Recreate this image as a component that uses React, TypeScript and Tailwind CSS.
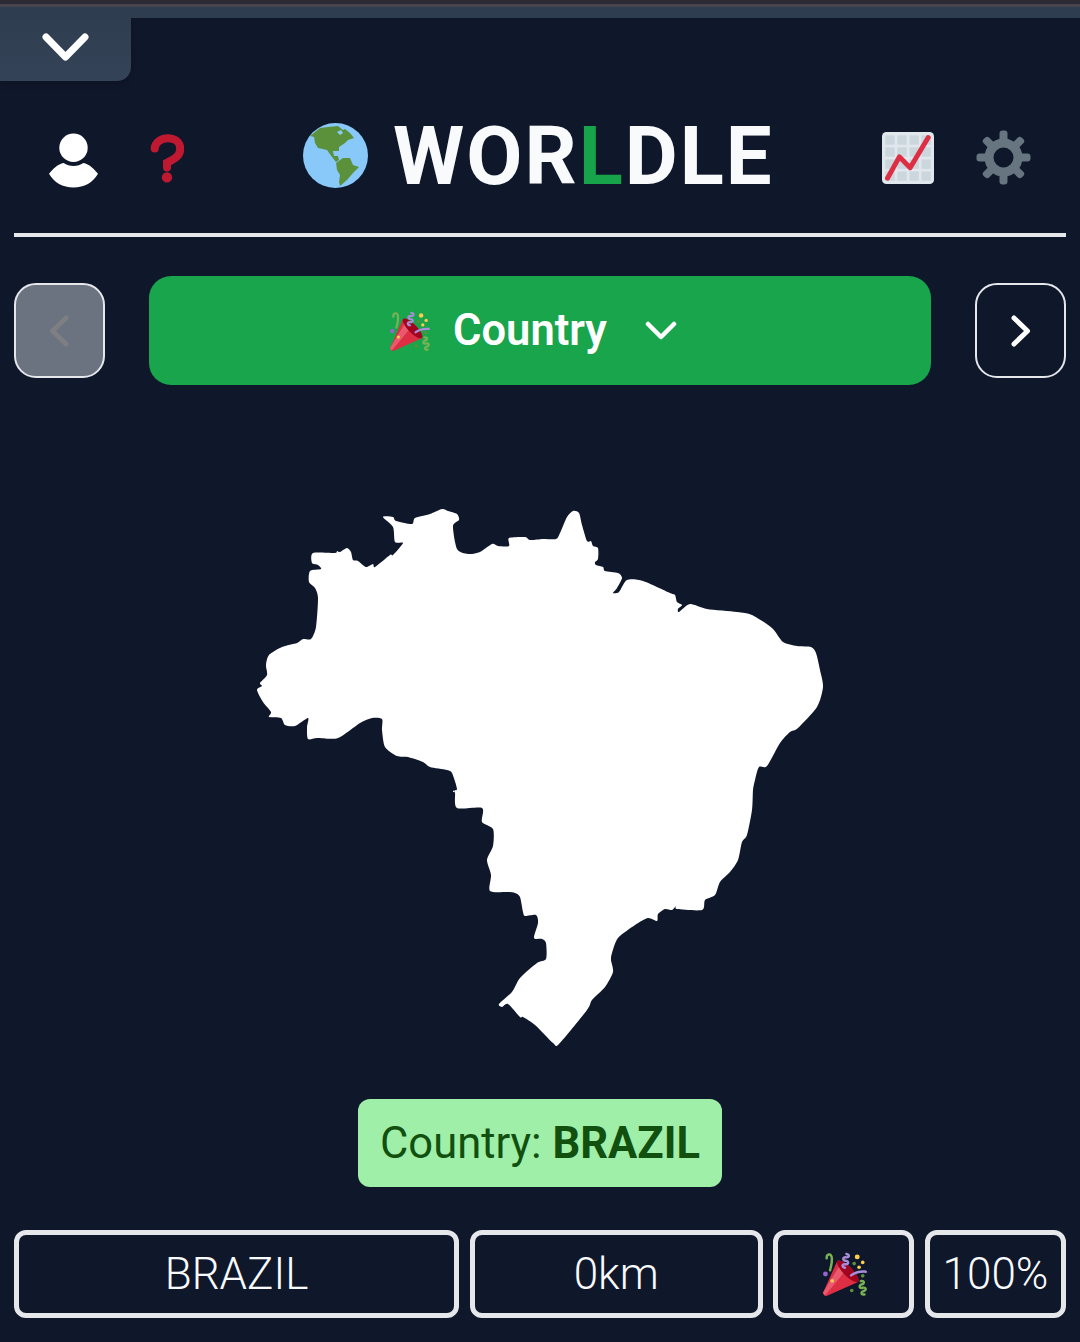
const BRAZIL: [number, number][] = (
  "383,517 393,517 396,521 412,524 415,518 430,514 442,509 448,511 457,514 459,520 453,526 457,549 468,554 480,552 492,544 498,546 509,546 509,538 525,537 530,540 543,539 556,539 560,533 567,517 573,511 579,513 582,525 587,541 591,541 593,546 598,548 598,559 595,562 596,565 603,567 605,571 618,573 622,578 617,588 613,593 619,592 627,580 643,581 670,593 675,595 677,602 682,605 678,609 679,612 690,604 707,609 737,612 752,615 772,628 783,642 797,646 811,647 816,653 820,670 823,687 817,707 798,728 790,732 780,743 767,766 759,767 755,780 753,790 752,810 747,835 742,842 738,860 730,872 720,882 715,895 705,900 702,910 677,909 676,906 672,910 665,909 658,914 657,921 648,918 635,925 618,938 612,953 611,960 613,972 605,987 592,1000 587,1010 559,1044 553,1043 535,1025 523,1017 520,1017 508,1004 502,1007 499,1004 512,992 520,978 537,963 546,959 546,943 542,939 534,938 538,923 536,915 525,916 523,912 520,897 515,893 508,892 490,891 491,875 487,860 493,846 493,829 482,822 482,808 457,808 455,793 453,791 457,789 452,773 447,770 430,767 423,762 408,757 397,756 385,747 382,730 382,719 372,718 360,723 338,738 317,738 308,739 307,727 308,718 295,726 285,725 281,718 269,717 271,712 263,702 257,690 262,686 260,683 267,675 266,665 269,655 282,647 297,643 303,639 311,639 316,627 318,598 315,588 309,582 310,571 321,569 318,565 312,563 313,553 335,553 337,551 340,552 347,548 351,552 353,560 358,561 366,567 373,564 375,567 390,555 393,555 403,543 395,542 393,527"
)
  .split(" ")
  .map((p) => p.split(",").map(Number) as [number, number]);

// soft curves through the traced outline so the coast isn't all straight segments
function smoothPath(pts: [number, number][]) {
  const n = pts.length;
  let d = `M${pts[0][0]} ${pts[0][1]}`;
  for (let i = 0; i < n; i++) {
    const p0 = pts[(i - 1 + n) % n];
    const p1 = pts[i];
    const p2 = pts[(i + 1) % n];
    const p3 = pts[(i + 2) % n];
    const c1x = p1[0] + (p2[0] - p0[0]) / 8;
    const c1y = p1[1] + (p2[1] - p0[1]) / 8;
    const c2x = p2[0] - (p3[0] - p1[0]) / 8;
    const c2y = p2[1] - (p3[1] - p1[1]) / 8;
    d += ` C${c1x} ${c1y} ${c2x} ${c2y} ${p2[0]} ${p2[1]}`;
  }
  return d + "Z";
}

function PartyPopper({ className }: { className: string }) {
  return (
    <svg className={className} viewBox="0 0 36 36">
      <path fill="#DD2E44" d="M11.626 7.488c-.112.112-.197.247-.268.395l-.008-.008L.134 33.141l.011.011c-.208.403.14 1.223.853 1.937.713.713 1.533 1.061 1.936.853l.01.01L28.21 24.735l-.008-.009c.147-.07.282-.155.395-.269 1.562-1.562-.971-6.627-5.656-11.313-4.687-4.686-9.752-7.218-11.315-5.656z" />
      <path fill="#EA596E" d="M13 12L.416 32.506l-.282.635.011.011c-.208.403.14 1.223.853 1.937.232.232.473.408.709.557L17 17l-4-5z" />
      <path fill="#A0041E" d="M23.012 13.066c4.67 4.672 7.263 9.652 5.789 11.124-1.473 1.474-6.453-1.118-11.126-5.788-4.671-4.672-7.263-9.654-5.79-11.127 1.474-1.473 6.454 1.119 11.127 5.791z" />
      <path fill="#AA8DD8" d="M18.59 13.609c-.199.161-.459.245-.734.215-.868-.094-1.598-.396-2.109-.873-.541-.505-.808-1.183-.735-1.862.128-1.192 1.324-2.286 3.363-2.066.793.085 1.147-.17 1.159-.292.014-.121-.277-.446-1.07-.532-.868-.094-1.598-.396-2.11-.873-.541-.505-.809-1.183-.735-1.862.13-1.192 1.325-2.286 3.362-2.065.578.062.883-.057 1.012-.134.103-.063.144-.123.148-.158.012-.121-.275-.446-1.07-.532-.549-.06-.947-.552-.886-1.102.059-.549.55-.946 1.101-.886 2.037.219 2.973 1.542 2.844 2.735-.13 1.194-1.325 2.286-3.364 2.067-.578-.063-.88.057-1.01.134-.103.062-.145.123-.149.157-.013.122.276.446 1.071.532 2.037.22 2.973 1.542 2.844 2.735-.129 1.192-1.324 2.286-3.362 2.065-.578-.062-.882.058-1.012.134-.104.064-.144.124-.148.158-.013.121.276.446 1.07.532.548.06.947.553.886 1.102-.028.274-.167.511-.366.671z" />
      <path fill="#77B255" d="M30.661 22.857c1.973-.557 3.334.323 3.658 1.478.324 1.154-.378 2.615-2.35 3.17-.77.216-1.001.584-.97.701.034.118.425.312 1.193.095 1.972-.555 3.333.325 3.657 1.479.326 1.155-.378 2.614-2.351 3.17-.769.216-1.001.585-.967.702.033.117.423.311 1.192.095.53-.149 1.084.16 1.233.691.148.532-.161 1.084-.693 1.234-1.971.555-3.333-.323-3.659-1.479-.324-1.154.379-2.613 2.353-3.169.77-.217 1.001-.584.967-.702-.032-.117-.422-.312-1.19-.096-1.974.556-3.334-.322-3.659-1.479-.325-1.154.378-2.613 2.351-3.17.768-.215.999-.585.967-.701-.034-.118-.423-.312-1.192-.096-.532.15-1.083-.16-1.233-.691-.149-.53.161-1.082.693-1.232z" />
      <path fill="#AA8DD8" d="M23.001 20.16c-.294 0-.584-.129-.782-.375-.345-.432-.274-1.061.156-1.406.218-.175 5.418-4.259 12.767-3.208.547.078.927.584.849 1.131-.078.546-.58.93-1.132.848-6.493-.922-11.187 2.754-11.233 2.791-.186.148-.406.219-.625.219z" />
      <path fill="#77B255" d="M5.754 16c-.095 0-.192-.014-.288-.042-.529-.159-.829-.716-.67-1.245 1.133-3.773 2.16-9.794.898-11.364-.141-.178-.354-.353-.842-.316-.938.072-.849 2.051-.848 2.071.042.551-.372 1.031-.922 1.072-.559.034-1.031-.372-1.072-.923-.103-1.379.326-4.035 2.692-4.214 1.056-.08 1.933.287 2.552 1.057 2.371 2.951-.036 11.506-.542 13.192-.13.433-.528.712-.958.712z" />
      <circle fill="#5C913B" cx="25.5" cy="9.5" r="1.5" />
      <circle fill="#9266CC" cx="2" cy="18" r="2" />
      <circle fill="#5C913B" cx="32.5" cy="19.5" r="1.5" />
      <circle fill="#5C913B" cx="23.5" cy="31.5" r="1.5" />
      <circle fill="#FFCC4D" cx="28" cy="4" r="2" />
      <circle fill="#FFCC4D" cx="32.5" cy="8.5" r="1.5" />
      <circle fill="#FFCC4D" cx="29.5" cy="12.5" r="1.5" />
      <circle fill="#FFCC4D" cx="7.5" cy="23.5" r="1.5" />
    </svg>
  );
}

function Globe() {
  return (
    <svg className="w-[65px] h-[65px] shrink-0" viewBox="0 0 65 65">
      <circle cx="32.5" cy="32.5" r="32.5" fill="#88C9F9" />
      <path fill="#5C913B" d="M7 13 L17 5 L25 4 L35 3 L40 7 L42 6 L47 10 L51 15 L45 17 L42 20 L36 24 L36 28 L30 28 L31 33 L35 33 L36 37 L33 39 L29 34 L24 27 L15 25 L12 20 L11 14 Z" />
      <path fill="#88C9F9" d="M34 9 L38 7 L40 10 L37 12 Z" />
      <path fill="#5C913B" d="M33 40 L40 35 L47 35 L50 42 L56 44 L50 50 L44 57 L37 63 L36 59 L37 52 L34 47 Z" />
    </svg>
  );
}

function ChartIcon() {
  const cells = [2.3, 10.6, 19, 27.3];
  return (
    <svg className="w-[52px] h-[52px] mt-[1px] shrink-0" viewBox="0 0 36 36">
      <rect x="0" y="0" width="36" height="36" rx="3" fill="#E1E8ED" />
      {cells.map((x) =>
        cells.map((y) => <rect key={`${x}-${y}`} x={x} y={y} width="6.5" height="6.5" fill="#CCD6DD" />),
      )}
      <path d="M3.8 32 L12 17.2 L19.5 24.7 L32 3.8" fill="none" stroke="#DD2E44" strokeWidth="3.4" strokeLinecap="round" strokeLinejoin="round" />
    </svg>
  );
}

function GearIcon() {
  return (
    <svg className="w-[55px] h-[55px] shrink-0" viewBox="0 0 55 55">
      {[0, 45, 90, 135, 180, 225, 270, 315].map((r) => (
        <rect key={r} x="23.5" y="0.5" width="8" height="13" rx="3" fill="#66757F" transform={`rotate(${r} 27.5 27.5)`} />
      ))}
      <circle cx="27.5" cy="27.5" r="14.5" fill="none" stroke="#66757F" strokeWidth="9" />
    </svg>
  );
}

function StatBox({ className, children }: { className: string; children: React.ReactNode }) {
  return (
    <div className={`h-[88px] flex items-center justify-center border-[5px] border-gray-200 rounded-[12px] text-[44px] font-light text-gray-50 ${className}`}>
      {children}
    </div>
  );
}

export default function App() {
  return (
    <div className="relative w-[1080px] h-[1342px] overflow-hidden bg-[#0f172a] font-['Roboto',sans-serif]">
      <div className="h-[4px] bg-[#2c2a35]" />
      <div className="h-[3px] bg-[#47434f]" />
      <div className="h-[11px] bg-[#2f3d50]" />
      <button className="absolute top-[18px] left-0 w-[131px] h-[63px] flex items-start justify-center pt-[15px] bg-linear-to-b from-[#2f3d50] to-[#354358] rounded-br-[14px] shadow-md">
        <svg className="w-[47px] h-[29px]" viewBox="0 0 47 29">
          <path d="M4 4 L23.5 24 L43 4" fill="none" stroke="white" strokeWidth="7" strokeLinecap="round" strokeLinejoin="round" />
        </svg>
      </button>

      <header className="h-[215px] pt-[63px] pl-[49px] flex items-center">
        <svg className="w-[49px] h-[55px] mt-[6px] shrink-0" viewBox="0 0 50 55">
          <circle cx="25" cy="14.5" r="14.5" fill="white" />
          <path d="M0 41 C4 36 9 31 15 30 C18 32 21 33 25 33 C29 33 32 32 35 30 C41 31 46 36 50 41 C45 50 36 55 25 55 C14 55 5 50 0 41 Z" fill="white" />
        </svg>
        <svg className="w-[34px] h-[51px] ml-[52px] mt-[3px] shrink-0" viewBox="0 0 36 51">
          <path d="M18 35 V30 C26 26 32 23 32 15 C32 8 26 4 19 4 C11 4 5 9 5 15" fill="none" stroke="#BE1931" strokeWidth="8.5" strokeLinecap="round" />
          <circle cx="18" cy="45.5" r="5.5" fill="#BE1931" />
        </svg>
        <div className="ml-[119px] mb-[4px]">
          <Globe />
        </div>
        <h1 className="ml-[25px] w-[378px] text-[81.5px] leading-none font-bold tracking-[2px] text-[#f8fafc] whitespace-nowrap">
          WOR<span className="text-[#16a34a]">L</span>DLE
        </h1>
        <div className="ml-[111px]">
          <ChartIcon />
        </div>
        <div className="ml-[42px]">
          <GearIcon />
        </div>
      </header>

      <div className="mx-[14px] border-b-4 border-gray-200" />

      <nav className="mt-[39px] px-[14px] h-[109px] flex items-center gap-[44px]">
        <button className="w-[91px] h-[95px] shrink-0 flex items-center justify-center bg-[#6b7280] border-2 border-gray-200 rounded-[22px]">
          <svg className="w-[20px] h-[32px] -ml-[2px]" viewBox="0 0 20 32">
            <path d="M17 3 L3.5 16 L17 29" fill="none" stroke="#7d7f82" strokeWidth="5" strokeLinecap="round" strokeLinejoin="round" />
          </svg>
        </button>
        <button className="flex-1 h-[109px] pr-[13px] flex items-center justify-center bg-[#18a54c] rounded-[22px] text-[43.5px] font-semibold text-white">
          <PartyPopper className="w-[40px] h-[40px] mr-[23px]" />
          Country
          <svg className="w-[32px] h-[20px] ml-[38px]" viewBox="0 0 32 20">
            <path d="M3 3 L16 16 L29 3" fill="none" stroke="white" strokeWidth="4.5" strokeLinecap="round" strokeLinejoin="round" />
          </svg>
        </button>
        <button className="w-[91px] h-[95px] shrink-0 flex items-center justify-center border-2 border-gray-200 rounded-[22px]">
          <svg className="w-[20px] h-[32px] ml-[1px]" viewBox="0 0 20 32">
            <path d="M3 3 L16.5 16 L3 29" fill="none" stroke="white" strokeWidth="5" strokeLinecap="round" strokeLinejoin="round" />
          </svg>
        </button>
      </nav>

      <svg className="block mt-[115px] mx-auto w-[580px] h-[560px]" viewBox="250 500 580 560">
        <path d={smoothPath(BRAZIL)} fill="white" />
      </svg>

      <div className="mt-[39px] flex justify-center">
        <div className="h-[88px] w-[364px] pt-[2px] flex items-center justify-center bg-[#9fefa8] rounded-[12px] text-[43.5px] text-[#11500f] whitespace-nowrap">
          Country:&nbsp;<span className="font-bold">BRAZIL</span>
        </div>
      </div>

      <div className="mt-[43px] px-[14px] flex gap-[10.67px]">
        <StatBox className="w-[445px]">BRAZIL</StatBox>
        <StatBox className="w-[293px]">0km</StatBox>
        <StatBox className="w-[141px]">
          <PartyPopper className="w-[44px] h-[44px] ml-[2px]" />
        </StatBox>
        <StatBox className="w-[141px]">100%</StatBox>
      </div>
    </div>
  );
}
